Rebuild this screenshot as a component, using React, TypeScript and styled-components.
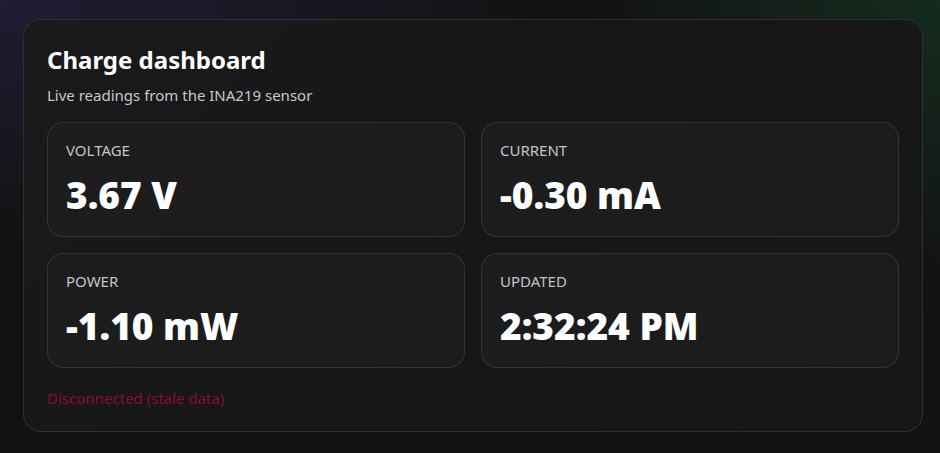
import React from 'react';
import styled, { createGlobalStyle } from 'styled-components';

const GlobalStyle = createGlobalStyle`
    html, body {
        margin: 0;
        padding: 0;
        height: 100%;
    }

    body {
        font-family: 'Noto Sans', 'Open Sans', sans-serif;
        color: #f2f2f2;
        background:
            radial-gradient(ellipse 80% 70% at 0% 0%, rgba(44, 42, 92, 0.45), transparent 75%),
            radial-gradient(ellipse 50% 85% at 100% 0%, rgba(24, 78, 48, 0.42), transparent 75%),
            #121212;
    }
`;

const Page = styled.div`
    min-height: 453px;
    box-sizing: border-box;
    padding: 19px 17px 22px 23px;
`;

const Panel = styled.section`
    box-sizing: border-box;
    width: 900px;
    padding: 24px 23px 23px 23px;
    border: 1px solid rgba(255, 255, 255, 0.1);
    border-radius: 18px;
    background: linear-gradient(135deg, #1a1a1d 0%, #161616 55%, #161817 100%);
`;

const Heading = styled.h1`
    margin: 0;
    font-size: 24px;
    line-height: 32px;
    font-weight: 700;
    color: #ffffff;
`;

const Subheading = styled.p`
    margin: 9px 0 0;
    font-size: 15px;
    line-height: 20px;
    color: #c8c8c8;
`;

const Grid = styled.div`
    display: grid;
    grid-template-columns: 1fr 1fr;
    gap: 16px;
    margin-top: 17px;
`;

const Tile = styled.div`
    box-sizing: border-box;
    height: 115px;
    padding: 17px 18px 0;
    border: 1px solid rgba(255, 255, 255, 0.1);
    border-radius: 16px;
    background: linear-gradient(135deg, #1d1d1f 0%, #1b1b1b 100%);
`;

const Label = styled.div`
    font-size: 15px;
    line-height: 20px;
    color: #c4c4c4;
    text-transform: uppercase;
`;

const Value = styled.div`
    margin-top: 11px;
    font-size: 37px;
    line-height: 48px;
    font-weight: 900;
    color: #ffffff;
`;

const Status = styled.div`
    margin-top: 20px;
    font-size: 15px;
    line-height: 20px;
    color: ${({ color }) => color || '#8c0c28'};
`;

interface ReadingProps {
    label: string;
    value: string;
}

const Reading: React.FC<ReadingProps> = ({ label, value }) => (
    <Tile>
        <Label>{label}</Label>
        <Value>{value}</Value>
    </Tile>
);

const readings: ReadingProps[] = [
    { label: 'Voltage', value: '3.67 V' },
    { label: 'Current', value: '-0.30 mA' },
    { label: 'Power', value: '-1.10 mW' },
    { label: 'Updated', value: '2:32:24 PM' },
];

export default function App() {
    return (
        <Page>
            <GlobalStyle />
            <Panel>
                <Heading>Charge dashboard</Heading>
                <Subheading>Live readings from the INA219 sensor</Subheading>
                <Grid>
                    {readings.map((r) => (
                        <Reading key={r.label} label={r.label} value={r.value} />
                    ))}
                </Grid>
                <Status>Disconnected (stale data)</Status>
            </Panel>
        </Page>
    );
}
